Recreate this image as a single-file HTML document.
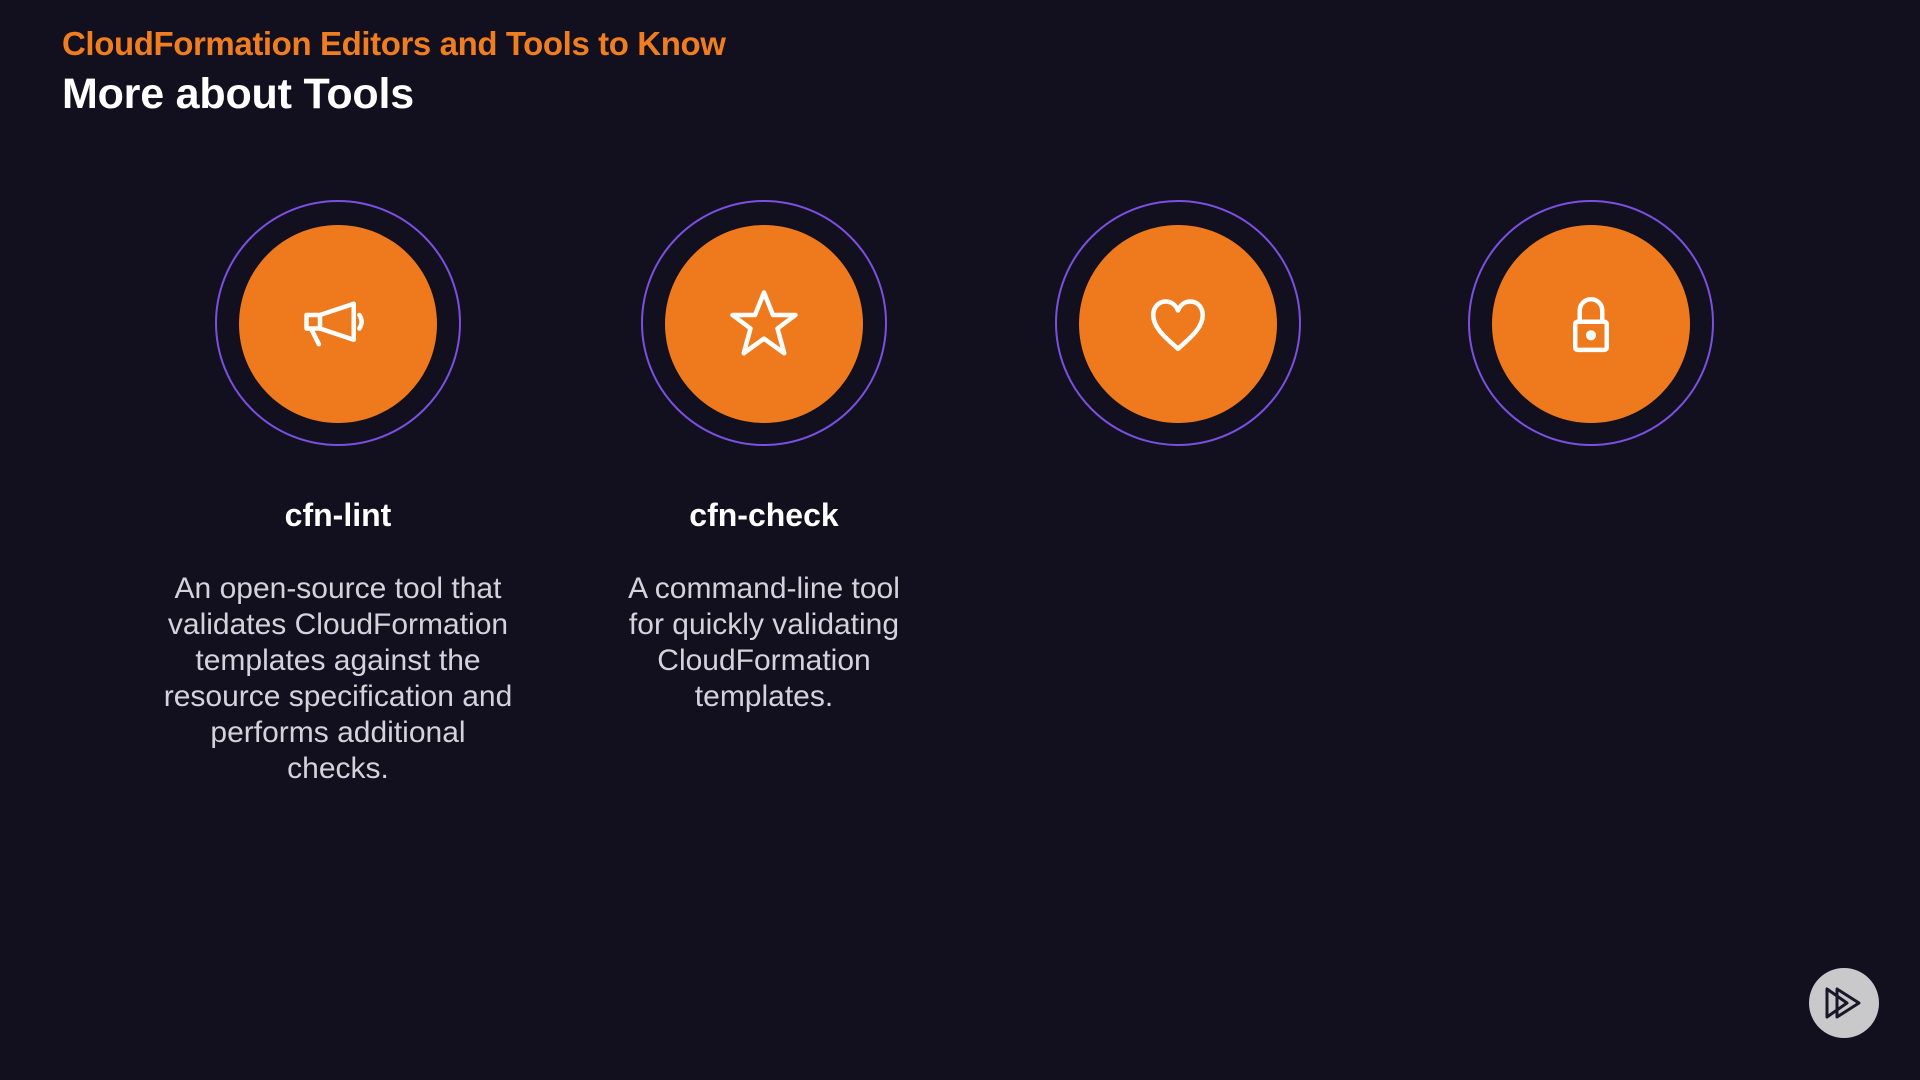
<!DOCTYPE html>
<html><head><meta charset="utf-8"><style>
html,body{margin:0;padding:0;}
body{width:1920px;height:1080px;background:#12101f;position:relative;overflow:hidden;font-family:"Liberation Sans",sans-serif;}
.sub{position:absolute;left:62px;top:25px;color:#f07d1f;font-weight:bold;font-size:33px;letter-spacing:-0.4px;}
.title{position:absolute;left:62px;top:70px;color:#fff;font-weight:bold;font-size:43px;letter-spacing:-0.2px;}
.c{position:absolute;top:200px;width:246px;height:246px;border:2px solid #7b4fe0;border-radius:50%;box-sizing:border-box;}
.c .in{position:absolute;left:22px;top:23px;width:198px;height:198px;border-radius:50%;background:#ef7a1e;display:flex;align-items:center;justify-content:center;}
.lbl{position:absolute;top:497px;width:440px;text-align:center;color:#fff;font-weight:bold;font-size:32px;}
.desc{position:absolute;top:571px;width:440px;text-align:center;color:#d4d3dc;font-size:30px;line-height:36px;}
.play{position:absolute;left:1809px;top:968px;width:70px;height:70px;border-radius:50%;background:#c9c9cc;}
</style></head><body>
<div class="sub">CloudFormation Editors and Tools to Know</div>
<div class="title">More about Tools</div>

<div class="c" style="left:215px"><div class="in">
<svg width="90" height="90" viewBox="0 0 80 80" fill="none" stroke="#fff" stroke-width="4" stroke-linejoin="round" stroke-linecap="round"><path d="M12 32h12v12h-12z M24 32l30-10v32l-30-10 M16 44l7 14 M59 32q4 6 0 12"/></svg>
</div></div>
<div class="c" style="left:641px"><div class="in">
<svg width="90" height="90" viewBox="0 0 80 80" fill="none" stroke="#fff" stroke-width="4" stroke-linejoin="round"><path d="M40 12l8 20h20l-16 12 6 22-18-13-18 13 6-22-16-12h20z"/></svg>
</div></div>
<div class="c" style="left:1055px"><div class="in">
<svg width="90" height="90" viewBox="0 0 80 80" fill="none" stroke="#fff" stroke-width="4" stroke-linejoin="round"><path d="M40 62c-14-12-22-20-22-30 0-7 5-12 11-12 5 0 9 3 11 8 2-5 6-8 11-8 6 0 11 5 11 12 0 10-8 18-22 30z"/></svg>
</div></div>
<div class="c" style="left:1468px"><div class="in">
<svg width="90" height="90" viewBox="0 0 80 80" fill="none" stroke="#fff" stroke-width="4" stroke-linejoin="round"><path d="M30 38v-10a10 10 0 0 1 20 0v10"/><rect x="26" y="38" width="28" height="25" rx="2"/><circle cx="40" cy="50" r="2.5" fill="#fff"/></svg>
</div></div>

<div class="lbl" style="left:118px">cfn-lint</div>
<div class="lbl" style="left:544px">cfn-check</div>
<div class="desc" style="left:118px">An open-source tool that<br>validates CloudFormation<br>templates against the<br>resource specification and<br>performs additional<br>checks.</div>
<div class="desc" style="left:544px">A command-line tool<br>for quickly validating<br>CloudFormation<br>templates.</div>

<div class="play"><svg width="70" height="70" viewBox="0 0 70 70" fill="none" stroke="#1a1828" stroke-width="3" stroke-linejoin="round"><path d="M18 21v28l20-14z M28 21v28l22-14z"/></svg></div>
</body></html>
